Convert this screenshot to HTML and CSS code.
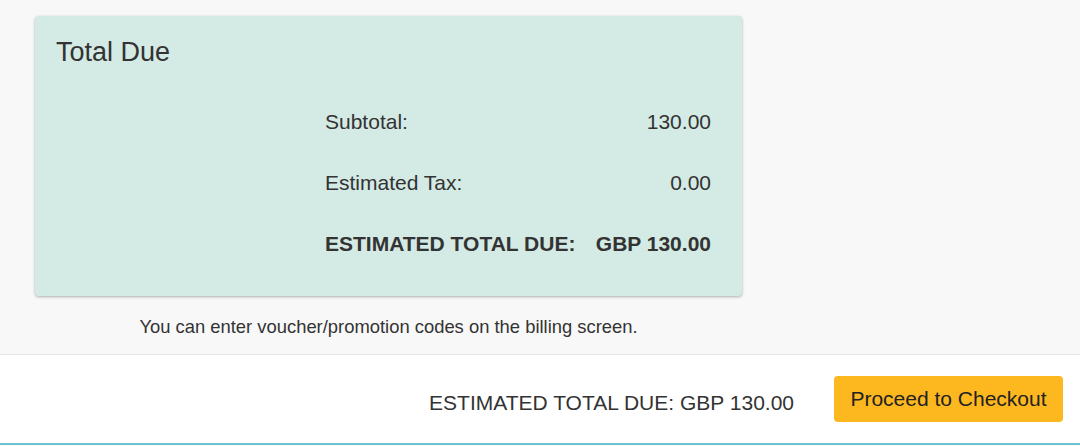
FILE: index.html
```html
<!DOCTYPE html>
<html lang="en">
<head>
  <meta charset="UTF-8" />
  <meta name="viewport" content="width=device-width, initial-scale=1.0"/>
  <title>Total Due</title>
  <link rel="stylesheet" href="styles.css">
</head>
<body>

  <div class="content">
    <div class="summary">
      <div class="card">
        <h2>Total Due</h2>
        <table class="totals">
          <tr>
            <td>Subtotal:</td>
            <td class="amount">130.00</td>
          </tr>
          <tr>
            <td>Estimated Tax:</td>
            <td class="amount">0.00</td>
          </tr>
          <tr class="grand">
            <td>ESTIMATED TOTAL DUE:</td>
            <td class="amount">GBP 130.00</td>
          </tr>
        </table>
      </div>
      <p class="note">You can enter voucher/promotion codes on the billing screen.</p>
    </div>
  </div>

  <div class="footer">
    <span class="footer-total">ESTIMATED TOTAL DUE: GBP 130.00</span>
    <button type="button">Proceed to Checkout</button>
  </div>

</body>
</html>
```

FILE: styles.css
```css
body {
  margin: 0;
  font-family: 'Liberation Sans', Arial, sans-serif;
  background: #f8f8f8;
  color: #333;
}
.content {
  padding: 16px 0 0 35px;
  height: 338px;
  border-bottom: 1px solid #e6e6e6;
}
.summary {
  width: 707px;
}
.card {
  background: #d4eae4;
  border-radius: 4px;
  box-shadow: 0 1px 3px rgba(0, 0, 0, 0.3);
  height: 280px;
  padding: 0 31px 0 21px;
  box-sizing: border-box;
  overflow: hidden;
}
h2 {
  margin: 0;
  padding-top: 21px;
  font-size: 27px;
  font-weight: normal;
  line-height: 30px;
}
.totals {
  margin: 24px 0 0 auto;
  width: 386px;
  border-collapse: collapse;
  font-size: 21px;
}
.totals td {
  padding: 0;
  height: 61px;
}
.totals .amount {
  text-align: right;
}
.totals .grand td {
  font-weight: bold;
}
.note {
  margin: 20px 0 0;
  text-align: center;
  font-size: 18.4px;
  line-height: 22px;
}
.footer {
  background: #fff;
  height: 88px;
  border-bottom: 2px solid #6cc3d8;
  display: flex;
  align-items: center;
  justify-content: flex-end;
  padding-right: 17px;
}
.footer-total {
  font-size: 21px;
  margin: 8px 40px 0 0;
}
button {
  background: #fdb71f;
  border: none;
  border-radius: 4px;
  height: 46px;
  width: 229px;
  font-family: inherit;
  font-size: 21px;
  color: #222;
  cursor: pointer;
}
```
